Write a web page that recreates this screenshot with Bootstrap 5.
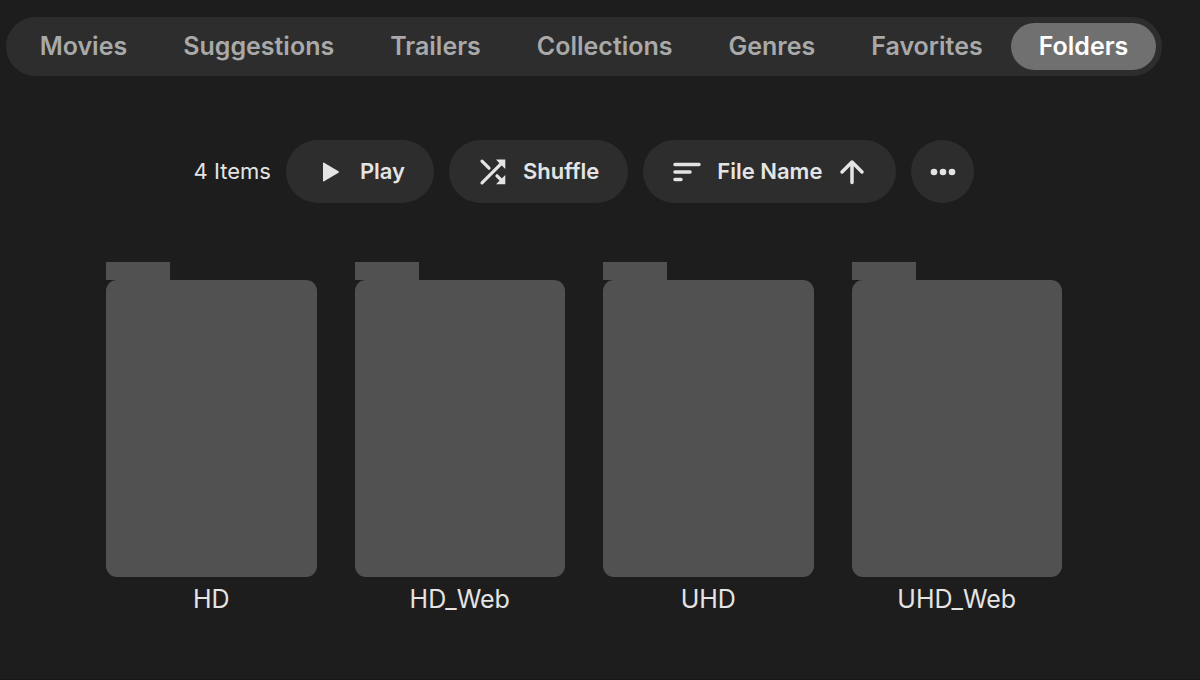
<!DOCTYPE html>
<html lang="en">
<head>
<meta charset="utf-8">
<meta name="viewport" content="width=device-width, initial-scale=1">
<title>Folders</title>
<link href="https://cdn.jsdelivr.net/npm/bootstrap@5.3.0/dist/css/bootstrap.min.css" rel="stylesheet">
<style>
  body { background: #1d1d1d; color: #e4e4e4; font-family: Inter, "Liberation Sans", sans-serif; }
  .page { min-height: 100vh; padding: 17px 32px 0 0; border-bottom: 1px solid #161616; }
  .section-tabs { background: #2d2d2d; padding: 6px; border-radius: 30px; }
  .section-tabs .nav-link { padding: 4px 28px; font-size: 25px; line-height: 39px; font-weight: 600; color: #a9a9a9; border-radius: 24px; }
  .section-tabs .nav-link:hover { color: #fff; }
  .section-tabs .nav-link.active { background: #707070; color: #fff; }
  .toolbar { gap: 15px; margin-top: 64px; font-size: 22px; line-height: 35px; }
  .tool { gap: 15px; --bs-btn-color: #e4e4e4; --bs-btn-bg: #2d2d2d; --bs-btn-border-width: 0; --bs-btn-hover-color: #fff; --bs-btn-hover-bg: #3a3a3a; --bs-btn-padding-y: 14px; --bs-btn-padding-x: 29px; --bs-btn-font-size: 22px; --bs-btn-line-height: 35px; --bs-btn-font-weight: 600; --bs-btn-border-radius: 32px; }
  .tool svg { width: 30px; height: 30px; flex: none; }
  .tool-more { --bs-btn-padding-x: 0; width: 63px; height: 63px; }
  .folders { padding: 0 106px; margin-top: 59px; }
  .folders .row { --bs-gutter-x: 38px; --bs-gutter-y: 24px; }
  .folder { color: #e4e4e4; font-size: 25px; line-height: 40px; }
  .folder-tab { width: 64px; height: 18px; background: #515151; }
  .folder-face { aspect-ratio: 210 / 296; background: #515151; border-radius: 11px; margin-bottom: 2px; }
</style>
</head>
<body>
<main class="page">
  <nav class="d-flex justify-content-center" aria-label="Library sections">
    <div class="section-tabs nav flex-nowrap">
      <a class="nav-link" href="#movies">Movies</a>
      <a class="nav-link" href="#suggestions">Suggestions</a>
      <a class="nav-link" href="#trailers">Trailers</a>
      <a class="nav-link" href="#collections">Collections</a>
      <a class="nav-link" href="#genres">Genres</a>
      <a class="nav-link" href="#favorites">Favorites</a>
      <a class="nav-link active" href="#folders" aria-current="page">Folders</a>
    </div>
  </nav>

  <div class="toolbar d-flex justify-content-center align-items-center">
    <span>4 Items</span>
    <button type="button" class="tool btn d-flex align-items-center">
      <svg viewBox="0 0 30 30" fill="currentColor" aria-hidden="true"><path d="M8 6.500Q8 5 9.500 5.900L23.500 14.200Q24.600 15 23.500 15.800L9.500 24.100Q8 25 8 23.500Z"/></svg>
      Play
    </button>
    <button type="button" class="tool btn d-flex align-items-center">
      <svg viewBox="0 0 30 30" fill="none" stroke="currentColor" stroke-width="3.200" stroke-linecap="round" aria-hidden="true"><path d="M4 4.200 11 11.200M4 25.800 25 4.800M19 18.800 25 24.800"/><path d="M18 2.600h9.300v9.300L24 8.800 21 5.800zM27.300 18v9.300H18L21 24.300 24 21.300z" fill="currentColor" stroke="none"/></svg>
      Shuffle
    </button>
    <button type="button" class="tool btn d-flex align-items-center">
      <svg viewBox="0 0 30 30" fill="none" stroke="currentColor" stroke-width="3.500" stroke-linecap="round" aria-hidden="true"><path d="M3 7.500H27M3 15H18M3 22.500H9"/></svg>
      File Name
      <svg viewBox="0 0 30 30" fill="none" stroke="currentColor" stroke-width="3.500" stroke-linecap="round" stroke-linejoin="round" aria-hidden="true"><path d="M15 25.500V5M5 15 15 5 25 15"/></svg>
    </button>
    <button type="button" class="tool tool-more btn d-flex align-items-center justify-content-center" aria-label="More">
      <svg viewBox="0 0 30 30" fill="currentColor" aria-hidden="true"><circle cx="6" cy="15" r="3.300"/><circle cx="15" cy="15" r="3.300"/><circle cx="24" cy="15" r="3.300"/></svg>
    </button>
  </div>

  <section class="folders" aria-label="Folders">
    <div class="row row-cols-4">
      <div class="col"><a class="folder d-block text-center text-decoration-none" href="#hd"><div class="folder-tab"></div><div class="folder-face"></div>HD</a></div>
      <div class="col"><a class="folder d-block text-center text-decoration-none" href="#hd-web"><div class="folder-tab"></div><div class="folder-face"></div>HD_Web</a></div>
      <div class="col"><a class="folder d-block text-center text-decoration-none" href="#uhd"><div class="folder-tab"></div><div class="folder-face"></div>UHD</a></div>
      <div class="col"><a class="folder d-block text-center text-decoration-none" href="#uhd-web"><div class="folder-tab"></div><div class="folder-face"></div>UHD_Web</a></div>
    </div>
  </section>
</main>
<script src="https://cdn.jsdelivr.net/npm/bootstrap@5.3.0/dist/js/bootstrap.bundle.min.js"></script>
</body>
</html>
